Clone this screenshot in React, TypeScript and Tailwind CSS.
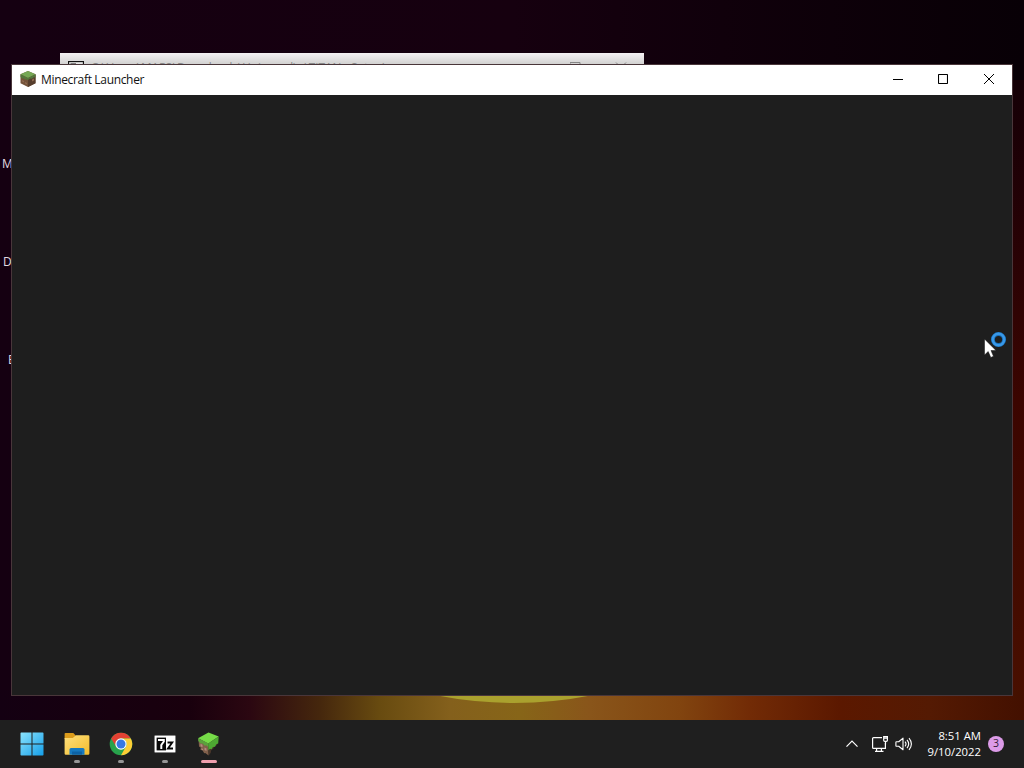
import type { ReactNode } from 'react';

const desktopLabels = [
  { text: 'M', left: 'left-[2px]', top: 'top-[156px]' },
  { text: 'D', left: 'left-[3px]', top: 'top-[254px]' },
  { text: 'E', left: 'left-[8px]', top: 'top-[352px]' },
];

const SevenZipIcon = ({ className }: { className: string }) => (
  <svg viewBox="0 0 22 18" className={className}>
    <rect width="22" height="18" fill="#080808" />
    <rect x=".5" y=".5" width="21" height="17" fill="#fff" />
    <rect x="2.6" y="2.6" width="9.4" height="12.8" fill="#080808" />
    <path d="M4 5h5.800v1.500L7.300 10v4" fill="none" stroke="#fff" strokeWidth="2" />
    <path d="M13.500 7.500h4.700L14 13.500h5" fill="none" stroke="#080808" strokeWidth="1.900" />
  </svg>
);

const RearZipIcon = () => (
  <svg viewBox="0 0 16 14" className="mt-2 h-3.5 w-4">
    <rect x=".5" y=".5" width="15" height="13" fill="#e8e8e8" stroke="#111" strokeWidth="1.300" />
    <path d="M2.500 2.500H8V12H2.500z" fill="#111" />
    <path d="M3.500 4h3v2L5 10" fill="none" stroke="#fff" />
    <path d="M9.500 5.500h3L10 10h3.500" fill="none" stroke="#111" />
  </svg>
);

const GrassBlock = () => (
  <svg viewBox="0 0 16 16" className="h-4 w-4">
    <path d="M8 0l7.5 3.2v9L8 16 .5 12.2v-9z" fill="#74533a" />
    <path d="M8 6.8l7.5-3.4v8.8L8 16z" fill="#563e2d" />
    <path d="M8 0l7.5 3.2L8 7 .5 3.2z" fill="#75a855" />
    <path d="M.5 3.2L8 7v2.2l-1.5-1-1.5.3-1.5-1.3-1.5.2L.5 6zM15.5 3.2L8 7v2l2-1.4 2 .2 1.7-1.6 1.8.2z" fill="#54773c" />
    <path d="M2 9l2 1v1.5l-2-1zM5 11l2 1v1.5l-2-1zM12 8.500l2-1v2l-2 1z" fill="#8e6a4f" />
  </svg>
);

const LauncherIcon = () => (
  <svg viewBox="0 0 24 26" className="mr-0.5 h-[26px] w-6">
    <path d="M2.500 8L12 12l.7 12.500-3.500-2.600-1 .4-1.700-3-2-.4.200-2.400-1.700-1z" fill="#80604b" />
    <path d="M12 12l9.500-5-.4 7-3 1.500-.5 2-2.400 1.700-.4 2.600-2.100 2.700z" fill="#49362a" />
    <path d="M2 7.300L12.500 1.500 22.700 5.500 12.300 12.500z" fill="#76dc48" />
    <path d="M2 7.300l10.300 5.200v3.800l-1.900-2-1.700.4-2-2.300-2 .1L2.300 10z" fill="#5aa33c" />
    <path d="M12.300 12.500L22.700 5.500l-.5 7-2 .7-1.100 2.600-2.200.3-1.300 2.100-1.700-.4-1.600 1.700z" fill="#4da832" />
    <path d="M4.500 12.700l2 1v2.500l-2-1zM8.500 16.500l2 1v2.500l-2-1zM5.500 17.300l1.600.8v1.300l-1.600-.8z" fill="#b58980" />
  </svg>
);

const WindowsLogo = () => (
  <svg viewBox="0 0 24 24" className="mr-0.5 h-6 w-6">
    <defs>
      <linearGradient id="winBlue" x1="0" y1="0" x2="1" y2="1">
        <stop offset="0" stopColor="#8be3fc" />
        <stop offset="1" stopColor="#159fe9" />
      </linearGradient>
    </defs>
    <path d="M1.300.5H11.500V11.500H.5V1.300Q.5.500 1.300.5zM12.500.5h10.200q.8 0 .8.8v10.200H12.500zM.5 12.500h11v11H1.300q-.8 0-.8-.8zM12.500 12.500h11v10.200q0 .8-.8.8H12.500z" fill="url(#winBlue)" />
  </svg>
);

const FolderIcon = () => (
  <svg viewBox="0 0 26 24" className="h-6 w-[26px]">
    <defs>
      <linearGradient id="folderFront" x1="0" y1="0" x2="1" y2="1">
        <stop offset="0" stopColor="#ffe07c" />
        <stop offset="1" stopColor="#f2bc2c" />
      </linearGradient>
    </defs>
    <path d="M1.500 1h7.800l2.400 2.600V7H.6V2Q.6 1 1.500 1z" fill="#dc9c1b" />
    <path d="M.6 6h8.200L12 3.300h12.200q1.200 0 1.200 1.200v17q0 1.200-1.200 1.200H1.800q-1.200 0-1.200-1.200z" fill="url(#folderFront)" />
    <path d="M5.500 22.700v-5.200Q5.500 16 7 16h12q1.500 0 1.500 1.500v5.200z" fill="#1679bf" />
    <path d="M8 19.500h10v3.200H8z" fill="#0d62a4" />
  </svg>
);

const ChromeIcon = () => (
  <svg viewBox="0 0 24 24" className="h-6 w-6">
    <circle cx="12" cy="12" r="11.300" fill="#28a34c" />
    <path d="M12 .7A11.300 11.300 0 0 1 21.800 6.400H12A5.600 5.600 0 0 0 7.150 14.800L2.200 6.400A11.300 11.300 0 0 1 12 .7z" fill="#e34133" />
    <path d="M21.800 6.400A11.300 11.300 0 0 1 12 23.300L16.850 14.800A5.600 5.600 0 0 0 12 6.400z" fill="#fdcd35" />
    <circle cx="12" cy="12" r="5.700" fill="#fff" />
    <circle cx="12" cy="12" r="4.500" fill="#3678e3" />
  </svg>
);

const WindowControls = () => (
  <div className="flex h-full text-black">
    <div className="flex w-[46px] items-center justify-center">
      <svg viewBox="0 0 10 10" className="h-2.5 w-2.5"><path d="M0 4.500h10" stroke="currentColor" /></svg>
    </div>
    <div className="flex w-[45px] items-center justify-center pr-px pb-0.5">
      <svg viewBox="0 0 10 10" className="h-2.5 w-2.5"><rect x=".5" y=".5" width="9" height="9" rx=".6" fill="none" stroke="currentColor" strokeWidth="1.100" /></svg>
    </div>
    <div className="flex w-[46px] items-center justify-center pb-0.5">
      <svg viewBox="0 0 10 10" className="h-2.5 w-2.5"><path d="M0 0l10 10M10 0L0 10" stroke="currentColor" /></svg>
    </div>
  </div>
);

const TaskbarItem = ({ children, indicator }: { children: ReactNode; indicator?: 'open' | 'active' }) => (
  <div className="flex h-12 w-11 flex-col items-center">
    <div className="flex h-10 items-end pb-[3px]">
      <div className="flex h-[26px] items-center">{children}</div>
    </div>
    {indicator === 'open' && <div className="h-[3px] w-1.5 rounded-full bg-[#969696]" />}
    {indicator === 'active' && <div className="h-[3px] w-4 rounded-full bg-[#f0a0ae]" />}
  </div>
);

const Taskbar = () => (
  <div className="flex h-12 items-center justify-between bg-[#1f1f1f] text-white">
    <div className="flex pl-[11px]">
      <TaskbarItem><WindowsLogo /></TaskbarItem>
      <TaskbarItem indicator="open"><FolderIcon /></TaskbarItem>
      <TaskbarItem indicator="open"><ChromeIcon /></TaskbarItem>
      <TaskbarItem indicator="open"><SevenZipIcon className="h-[18px] w-[22px]" /></TaskbarItem>
      <TaskbarItem indicator="active"><LauncherIcon /></TaskbarItem>
    </div>
    <div className="flex items-center pr-5">
      <svg viewBox="0 0 12 8" className="mr-[13px] h-2 w-3"><path d="M.5 6.700L6 1.200l5.500 5.500" fill="none" stroke="white" strokeWidth="1.200" /></svg>
      <svg viewBox="0 0 18 18" className="mr-[6px] h-[18px] w-[18px]" fill="none" stroke="white" strokeWidth="1.200">
        <path d="M11 2.600H2.600Q1.600 2.600 1.600 3.600v8.800q0 1 1 1h11.800v-5.400M5.600 13.500v2.500M10.400 13.500v2.500M4 16.400h8.500" />
        <path d="M12.700 1.600h3.700v3.700q0 1-1 1h-1.700q-1 0-1-1zM12.700 3.200h3.700M14.500 6.500v3" />
      </svg>
      <svg viewBox="0 0 18 18" className="mr-3.5 h-[18px] w-[18px]" fill="none" stroke="white" strokeWidth="1.100">
        <path d="M1.500 6.700h2.200L8 3.200v11.600l-4.300-3.500H1.500q-.6 0-.6-.6V7.300q0-.6.6-.6z" strokeLinejoin="round" />
        <path d="M10 6.700q2 2.300 0 4.600M12 4.900q3.400 4.100 0 8.200M14 3.200q4.800 5.800 0 11.600" />
      </svg>
      <div className="mr-[7px] flex w-[54px] flex-col items-end text-[11.300px] leading-4 whitespace-nowrap">
        <span>8:51 AM</span>
        <span>9/10/2022</span>
      </div>
      <div className="flex h-4 w-4 items-center justify-center rounded-full bg-[#dc9be8] text-[10.500px] text-[#352039]">3</div>
    </div>
  </div>
);

export default function App() {
  return (
    <div className="flex h-screen w-screen flex-col overflow-hidden bg-[#140008] font-['Open_Sans','Noto_Sans',sans-serif]">
      <div className="relative flex-1 overflow-hidden bg-linear-to-r from-[#150011] via-[#16000f] to-[#080006]">
        {/* sunset along the bottom and right edges of the wallpaper */}
        <div className="absolute right-0 bottom-0 h-[640px] w-3 bg-linear-to-b from-[#150006] via-[#3b0500] to-[#4a1000]" />
        <div className="absolute inset-x-0 bottom-0 h-[30px] bg-[linear-gradient(90deg,#140012_0,#19000d_190px,#2b0711_250px,#45270d_320px,#684b10_380px,#84601c_450px,#876518_520px,#89551a_590px,#81440f_680px,#722b06_750px,#5b1800_840px,#541a03_930px,#431000_1024px)]" />
        <div className="absolute bottom-[17px] left-[414px] h-[100px] w-[200px] overflow-hidden">
          <div className="absolute bottom-0 left-[-300px] h-[800px] w-[800px] rounded-full bg-[#aaa12e]" />
        </div>

        {desktopLabels.map((label) => (
          <span key={label.text} className={`absolute ${label.left} ${label.top} text-[12px] leading-4 text-[#e2dce0]`}>
            {label.text}
          </span>
        ))}

        <div className="absolute top-[53px] left-[60px] flex h-8 w-[584px] items-start bg-linear-to-b from-[#f5f2f4] to-[#cfcfce] to-[12px] pl-2 text-[#8a8a8a]">
          <RearZipIcon />
          <span className="mt-[6px] ml-[7px] w-[312px] text-[11.700px] leading-4 whitespace-nowrap">
            C:\Users\MAR3\Downloads\Universal\n\TITAN - Setup\
          </span>
          <svg viewBox="0 0 60 12" className="mt-[9px] ml-[167px] h-3 w-[60px]" fill="none" stroke="#858585">
            <path d="M0 3V.5h10V3M46 .5l9 9M56 .5l-9 9" />
          </svg>
        </div>

        <div className="absolute top-[65px] left-3 flex h-[630px] w-[1000px] flex-col bg-[#1e1e1e] outline outline-[#49363a]">
          <div className="flex h-[30px] items-center justify-between bg-white pl-2">
            <div className="flex items-center gap-[5px] pb-0.5">
              <GrassBlock />
              <span className="pt-0.5 text-[12px] leading-4 tracking-[-0.33px] text-[#111]">Minecraft Launcher</span>
            </div>
            <WindowControls />
          </div>
          <div className="flex-1 bg-[#1e1e1e]" />
        </div>

        <svg viewBox="0 0 24 30" className="absolute top-[330px] left-[983px] h-[30px] w-6">
          <path d="M1.500 9v16l3.700-3.500 2.600 6 2.700-1.200L8 20.500h5z" fill="#fff" stroke="#111" strokeWidth=".5" />
          <circle cx="15.500" cy="9.500" r="5.600" fill="none" stroke="#176fb8" strokeWidth="4" />
          <circle cx="15.500" cy="9.500" r="5.700" fill="none" stroke="#3998e8" strokeWidth="2.400" />
        </svg>
      </div>
      <Taskbar />
    </div>
  );
}
